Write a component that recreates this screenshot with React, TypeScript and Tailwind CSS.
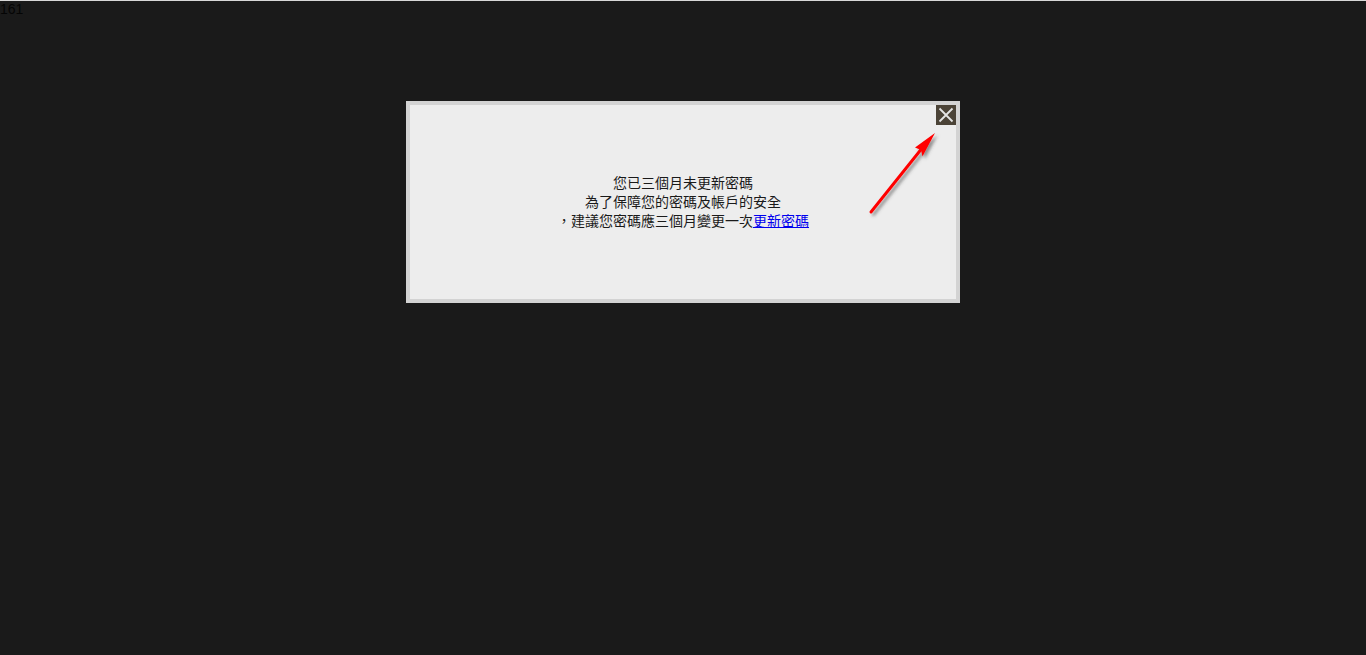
export default function App() {
  return (
    <div className="h-[655px] w-full overflow-hidden bg-[#1a1a1a] border-t border-[#d8d8d8]">
      <div className="h-4 text-[14px] leading-4 text-[#050505] font-[Liberation_Sans,Arial,sans-serif]">161</div>
      <div className="mx-auto mt-[84px] w-[554px] h-[202px] border-4 border-[#d3d3d3] bg-[#ededed] relative">
        <button className="absolute right-0 top-0 w-5 h-5 bg-[#4b4337] flex items-center justify-center">
          <svg width="20" height="20" viewBox="0 0 20 20">
            <path d="M3.5 3.5 L16.5 16.5 M16.5 3.5 L3.5 16.5" stroke="#e4e4e4" strokeWidth="1.8" />
          </svg>
        </button>
        <svg className="absolute left-[455px] top-[20px]" width="80" height="100" viewBox="0 0 80 100">
          <defs>
            <filter id="sh" x="-30%" y="-30%" width="160%" height="160%">
              <feDropShadow dx="2.5" dy="2.5" stdDeviation="1.5" floodColor="#444" floodOpacity="0.55" />
            </filter>
          </defs>
          <g filter="url(#sh)">
            <path d="M6 87 L58 22" stroke="#ff0000" strokeWidth="3" strokeLinecap="round" />
            <path d="M70 8 L57.5 31.5 L56 25 L50 22.5 Z" fill="#ff0000" />
          </g>
        </svg>
        <div className="h-full flex flex-col items-center justify-center pb-[2px] text-[14px] leading-[19px] text-[#1a1a1a] font-['Noto_Sans_CJK_TC','Noto_Sans_CJK_SC',sans-serif]">
          <p>您已三個月未更新密碼</p>
          <p>為了保障您的密碼及帳戶的安全</p>
          <p>
            ，建議您密碼應三個月變更一次
            <a href="#" className="text-[#0000ee] underline">更新密碼</a>
          </p>
        </div>
      </div>
    </div>
  );
}
